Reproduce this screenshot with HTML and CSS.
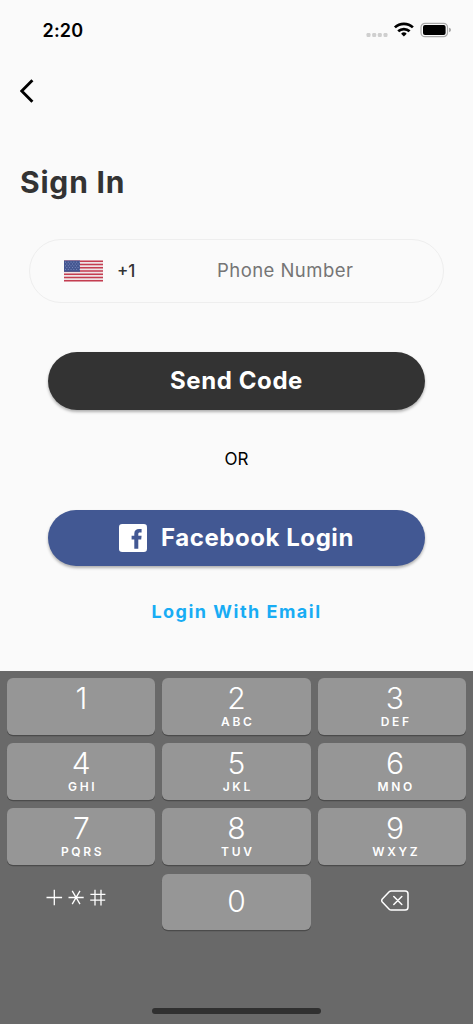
FILE: index.html
```html
<!DOCTYPE html>
<html lang="en">
<head>
<meta charset="utf-8">
<title>Sign In</title>
<link rel="stylesheet" href="styles.css">
</head>
<body>
<div class="screen">
  <header class="status">
    <span class="time">2:20</span>
    <svg class="status-icons" width="86" height="18" viewBox="0 0 86 18">
      <g fill="#cfcfcf"><rect x="1.5" y="12" width="4" height="4" rx="1.2"/><rect x="7.2" y="12" width="4" height="4" rx="1.2"/><rect x="12.8" y="12" width="4" height="4" rx="1.2"/><rect x="18.5" y="12" width="4" height="4" rx="1.2"/></g>
      <g fill="none" stroke="#000" stroke-width="2.7"><path d="M29.9 6.4a13 13 0 0 1 18 0"/><path d="M33.2 10.3a8.3 8.3 0 0 1 11.4 0"/></g>
      <path d="M38.9 15.5l-2.8-2.8a4 4 0 0 1 5.6 0z" fill="#000"/>
      <rect x="56" y="2.3" width="26.5" height="13.4" rx="4" fill="none" stroke="#aaa" stroke-width="1.2"/>
      <rect x="58" y="4.1" width="22.6" height="9.8" rx="2" fill="#000"/>
      <path d="M84.2 6.8q1.7.6 1.7 2.2t-1.7 2.2z" fill="#999"/>
    </svg>
  </header>
  <nav class="nav">
    <svg width="16" height="26" viewBox="0 0 16 26"><path d="M12.4 2.2L1.7 13l10.7 10.8" fill="none" stroke="#000" stroke-width="2.9"/></svg>
  </nav>
  <main class="form">
    <h1 class="title">Sign In</h1>
    <div class="phone">
      <svg class="flag" width="39" height="22" viewBox="0 0 39 22">
        <rect y=".5" width="39" height="21" fill="#eee3e5"/>
        <path d="M0 1.3h39M0 4.5h39M0 7.8h39M0 11h39M0 14.2h39M0 17.5h39M0 20.7h39" stroke="#c43d50" stroke-width="1.6"/>
        <rect y=".5" width="16" height="11.3" fill="#435590"/>
        <path d="M1 2.2h15M2.4 4h13M1 5.8h15M2.4 7.6h13M1 9.4h15" stroke="#8d9cc8" stroke-width=".9" stroke-dasharray=".9 1.9"/>
      </svg>
      <span class="code">+1</span>
      <span class="placeholder">Phone Number</span>
    </div>
    <button class="btn send">Send Code</button>
    <div class="or">OR</div>
    <button class="btn facebook">
      <svg width="28" height="28" viewBox="0 0 28 28"><rect width="28" height="28" rx="3.2" fill="#fff"/><path d="M15.3 24.8v-9.4h-2.7v-3.6h2.7V9.7c0-3.1 1.8-4.6 4.7-4.6h2.6v3.4h-1.8c-1.2 0-1.5.6-1.5 1.6v1.7h3.3l-.4 3.6h-2.9v9.4z" fill="#425893"/></svg>
      <span>Facebook Login</span>
    </button>
    <a class="email">Login With Email</a>
  </main>
  <section class="keyboard">
    <div class="keys">
      <div class="key"><b>1</b></div>
      <div class="key"><b>2</b><small>ABC</small></div>
      <div class="key last"><b>3</b><small>DEF</small></div>
      <div class="key"><b>4</b><small>GHI</small></div>
      <div class="key"><b>5</b><small>JKL</small></div>
      <div class="key last"><b>6</b><small>MNO</small></div>
      <div class="key"><b>7</b><small>PQRS</small></div>
      <div class="key"><b>8</b><small>TUV</small></div>
      <div class="key last"><b>9</b><small>WXYZ</small></div>
      <div class="plain symbols">
        <svg width="60" height="17" viewBox="0 0 60 17" fill="none" stroke="#fff" stroke-width="1.3"><path d="M.5 8.5h15.6M8.3.7v15.6M22.5 8.5h15.2M26.2 1.8l7.8 13.4M34 1.8l-7.8 13.4M44.4 5.4h15M44.2 11.2h15M49 .8v15.6M55 .8v15.6"/></svg>
      </div>
      <div class="key zero"><b>0</b></div>
      <div class="plain delete">
        <svg width="28" height="21" viewBox="0 0 28 21" fill="none" stroke="#fff" stroke-width="1.5" stroke-linecap="round" stroke-linejoin="round"><path d="M10.2 1h14q2.8 0 2.8 2.8v13.4q0 2.8-2.8 2.8h-14q-1.2 0-2-.8L1.3 12q-1.2-1.5 0-3L8.2 1.8q.8-.8 2-.8zM12.8 6.5l8 8M20.8 6.5l-8 8"/></svg>
      </div>
    </div>
    <div class="home"></div>
  </section>
</div>
</body>
</html>
```
FILE: styles.css
```css
* { box-sizing: border-box; }
body { margin: 0; background: #fafafa; font-family: Inter, "Liberation Sans", sans-serif; }
svg { display: block; flex: none; }
.screen { width: 473px; height: 1024px; display: flex; flex-direction: column; overflow: hidden; }
.status { height: 60px; padding: 21px 22px 0 42.5px; display: flex; justify-content: space-between; }
.time { font-size: 18px; font-weight: 600; line-height: 20px; letter-spacing: .2px; }
.nav { height: 62px; padding: 18px 0 0 19.5px; }
.form { height: 549px; display: flex; flex-direction: column; align-items: center; }
.title { align-self: flex-start; margin: 40px 0 0 20px; font-size: 30px; line-height: 40px; font-weight: 650; color: #333; letter-spacing: .8px; }
.phone { width: 415px; height: 64px; margin-top: 37px; border: 1px solid #eee; border-radius: 32px; padding-left: 34px; display: flex; align-items: center; }
.code { margin-left: 14px; width: 100px; font-size: 17px; font-weight: 500; color: #333; }
.placeholder { font-size: 18.5px; line-height: 24px; color: #757575; margin-top: -2px; letter-spacing: .45px; white-space: nowrap; }
.btn { width: 377px; border: 0; border-radius: 30px; padding: 0; color: #fff; font: 650 24px/30px Inter, "Liberation Sans", sans-serif; letter-spacing: .6px; display: flex; align-items: center; justify-content: center; box-shadow: 0 2px 3px rgba(0,0,0,.3); flex: none; }
.send { margin-top: 49px; height: 58px; background: #333; }
.or { margin-top: 37px; height: 24px; line-height: 24px; font-size: 17px; }
.facebook { margin-top: 39px; height: 56px; background: #425893; gap: 14px; letter-spacing: .55px; }
.email { margin-top: 33px; line-height: 25px; font-size: 18px; font-weight: 700; color: #18acf4; letter-spacing: 1.5px; }
.keyboard { height: 353px; flex: none; background: #696969; padding: 7px 7.3px 0; }
.keys { display: grid; grid-template-columns: repeat(3, 1fr); grid-auto-rows: 56.5px; gap: 8.7px 7.2px; }
.key { background: #969696; border-radius: 6px; box-shadow: 0 1.3px 0 #4b4b4b; color: #fff; display: flex; flex-direction: column; align-items: center; }
.last { padding-left: 6.5px; }
.key b { font-size: 30px; line-height: 36px; font-weight: 350; margin-top: 2px; }
.key small { font-size: 12px; line-height: 12px; font-weight: 600; letter-spacing: 2.7px; margin-right: -2.7px; }
.zero b { margin-top: 9px; }
.plain { display: flex; align-items: center; justify-content: center; }
.symbols { padding: 0 11px 8px 0; }
.delete { padding: 0 0 3px 7px; }
.home { width: 169px; height: 6px; border-radius: 3px; background: #303030; margin: 78px auto 0; }
```
